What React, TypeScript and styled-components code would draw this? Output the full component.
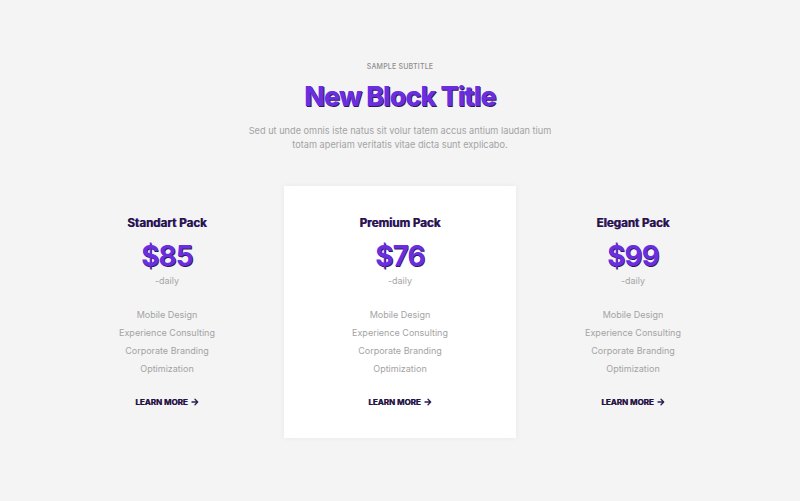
import styled, { createGlobalStyle } from "styled-components";

const GlobalStyle = createGlobalStyle`
  html, body {
    margin: 0;
    padding: 0;
    background: #f4f4f4;
    font-family: Inter, "Noto Sans", sans-serif;
  }
`;

type Plan = {
  name: string;
  price: string;
  featured?: boolean;
};

const plans: Plan[] = [
  { name: "Standart Pack", price: "$85" },
  { name: "Premium Pack", price: "$76", featured: true },
  { name: "Elegant Pack", price: "$99" },
];

const features = [
  "Mobile Design",
  "Experience Consulting",
  "Corporate Branding",
  "Optimization",
];

const Section = styled.section`
  width: 800px;
  height: 501px;
  box-sizing: border-box;
  padding-top: 62px;
  display: flex;
  flex-direction: column;
  align-items: center;
`;

const Subtitle = styled.div`
  font-size: 7px;
  font-weight: 500;
  letter-spacing: 0.2px;
  text-transform: uppercase;
  color: #8d8d8d;
  line-height: 9px;
`;

const Title = styled.h1`
  margin: 9px 0 0;
  font-size: 27px;
  line-height: 34px;
  font-weight: 800;
  letter-spacing: -1px;
  color: #6b2de0;
  text-shadow: 0.8px 0.8px 0 #2d1a55;
`;

const Description = styled.p`
  margin: 10px 0 0;
  width: 320px;
  text-align: center;
  font-size: 9.2px;
  line-height: 14px;
  color: #a3a3a3;
`;

const Grid = styled.div`
  margin-top: 34px;
  display: grid;
  grid-template-columns: repeat(3, 232px);
  column-gap: 1px;
`;

const Card = styled.div<{ $featured?: boolean }>`
  height: 252px;
  box-sizing: border-box;
  padding-top: 29px;
  display: flex;
  flex-direction: column;
  align-items: center;
  background: ${(p) => (p.$featured ? "#ffffff" : "transparent")};
  box-shadow: ${(p) =>
    p.$featured ? "0 0 6px rgba(0, 0, 0, 0.05)" : "none"};
`;

const PackName = styled.h3`
  margin: 0;
  font-size: 11.6px;
  line-height: 16px;
  font-weight: 700;
  color: #1f1933;
  text-shadow: 0.6px 0.4px 0 #7b3cf0;
`;

const Price = styled.div`
  margin-top: 8px;
  font-size: 28px;
  line-height: 34px;
  font-weight: 700;
  letter-spacing: -1px;
  color: #6b2de0;
  text-shadow: 0.6px 0.6px 0 #2d1a55;
`;

const Period = styled.div`
  margin-top: 2px;
  font-size: 9px;
  line-height: 12px;
  color: #a6a6a6;
`;

const Features = styled.ul`
  list-style: none;
  margin: 22px 0 0;
  padding: 0;
  display: flex;
  flex-direction: column;
  align-items: center;
  gap: 6px;
`;

const Feature = styled.li`
  font-size: 9px;
  line-height: 12px;
  color: #a3a3a3;
`;

const LearnMore = styled.a`
  margin-top: 22px;
  display: flex;
  align-items: center;
  gap: 3px;
  font-size: 8px;
  line-height: 10px;
  font-weight: 700;
  color: #1d1a2a;
  text-decoration: none;
  text-shadow: 0.4px 0.4px 0 #5b2bc0;
  svg {
    display: block;
  }
`;

const Arrow = () => (
  <svg width="8" height="8" viewBox="0 0 8 8" fill="none">
    <path
      d="M1 4h5.5M4 1.3 6.7 4 4 6.7"
      stroke="#2a1f52"
      strokeWidth="1.3"
      strokeLinecap="round"
      strokeLinejoin="round"
    />
  </svg>
);

export default function App() {
  return (
    <>
      <GlobalStyle />
      <Section>
        <Subtitle>Sample Subtitle</Subtitle>
        <Title>New Block Title</Title>
        <Description>
          Sed ut unde omnis iste natus sit volur tatem accus antium laudan tium
          totam aperiam veritatis vitae dicta sunt explicabo.
        </Description>
        <Grid>
          {plans.map((plan) => (
            <Card key={plan.name} $featured={plan.featured}>
              <PackName>{plan.name}</PackName>
              <Price>{plan.price}</Price>
              <Period>-daily</Period>
              <Features>
                {features.map((f) => (
                  <Feature key={f}>{f}</Feature>
                ))}
              </Features>
              <LearnMore href="#">
                LEARN MORE <Arrow />
              </LearnMore>
            </Card>
          ))}
        </Grid>
      </Section>
    </>
  );
}
